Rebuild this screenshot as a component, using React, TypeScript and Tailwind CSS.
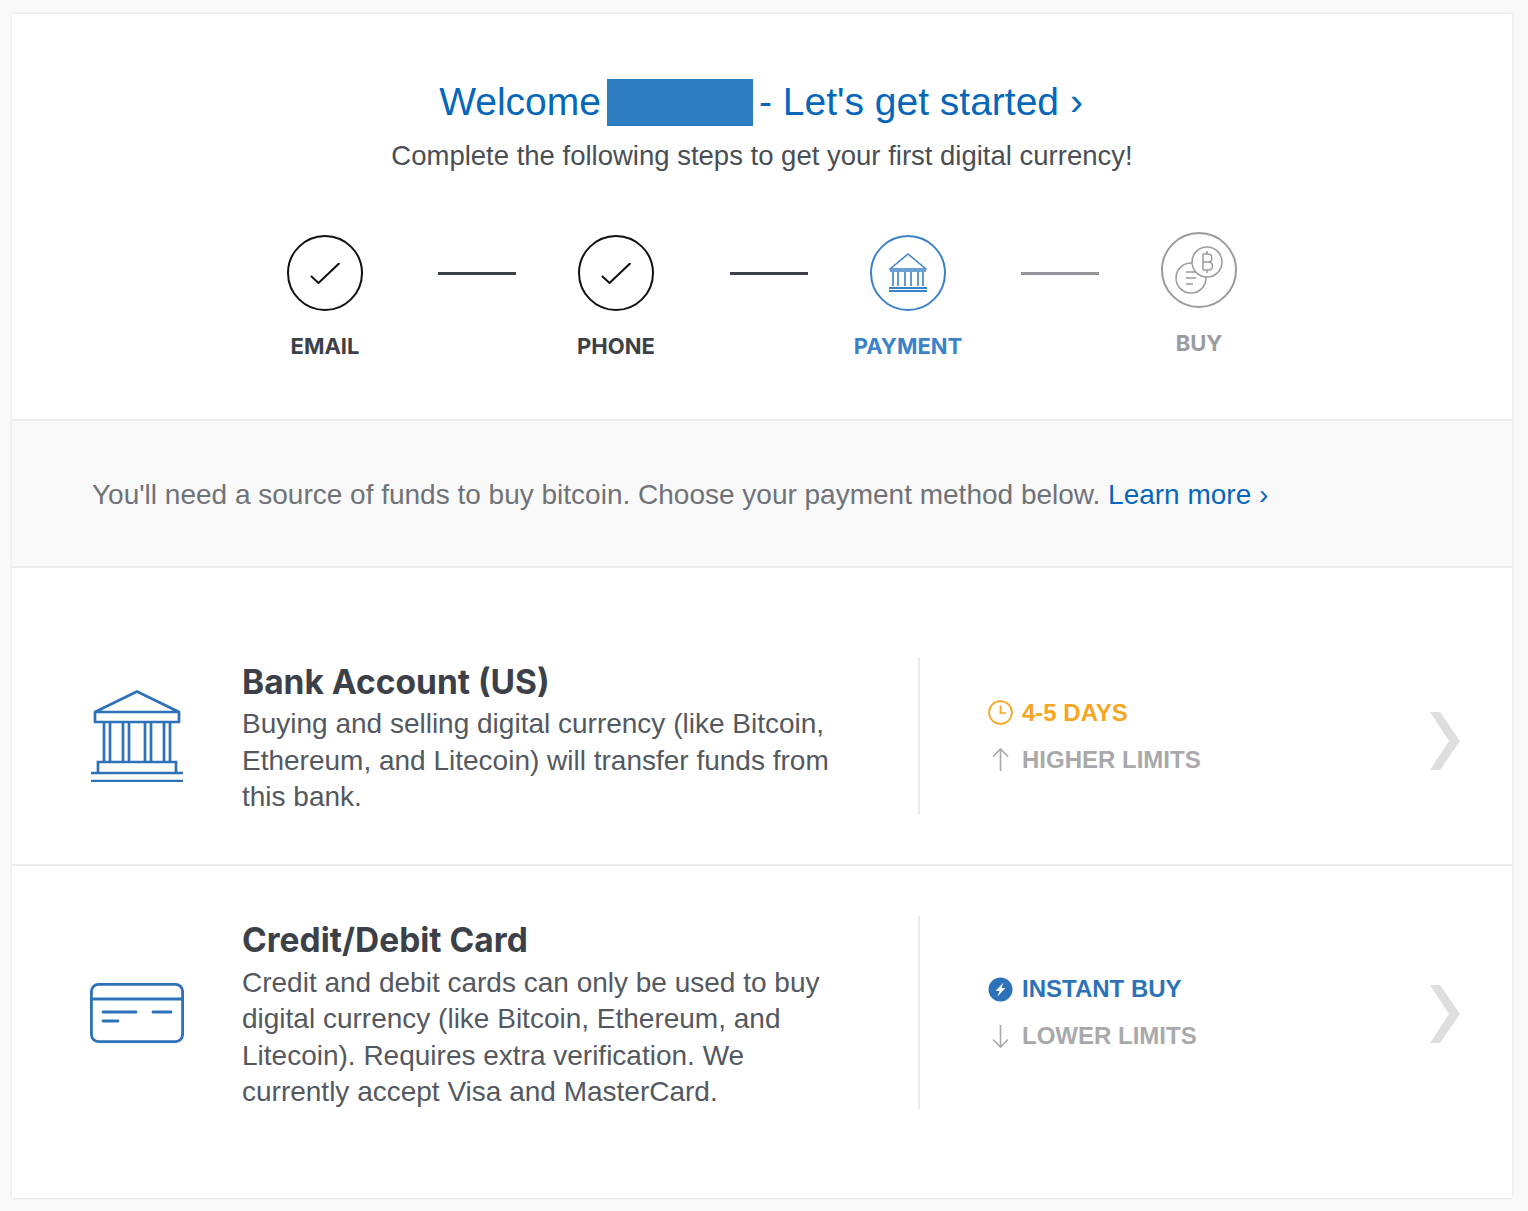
import React from 'react';

const BLUE = '#2d72b8';

function BankIcon({ className }: { className?: string }) {
  return (
    <svg className={className} viewBox="0 0 94 92" fill="none" stroke={BLUE} strokeWidth="2.7">
      <path d="M47 1.5 L5 22 V32 H89 V22 Z M5 22 H89" strokeLinejoin="round" />
      <path d="M14 32 V71 M20 32 V71 M33 32 V71 M39 32 V71 M55 32 V71 M61 32 V71 M74 32 V71 M80 32 V71" />
      <path d="M8 83 V72 H86 V83" />
      <path d="M1 83 H93 M1 91 H93" />
    </svg>
  );
}

function SmallBankIcon() {
  return (
    <svg className="w-[40px] h-[40px] -mt-[1px]" viewBox="0 0 40 40" fill="none" stroke="#3b82c9" strokeWidth="1.6">
      <path d="M20 1 L2 16 H38 Z" strokeLinejoin="round" />
      <path d="M2 18 H38" />
      <path d="M5 19 V33 M10 19 V33 M17 19 V33 M23 19 V33 M30 19 V33 M35 19 V33" />
      <path d="M1 35 H39 M1 38 H39" strokeWidth="2" />
    </svg>
  );
}

function CardIcon({ className }: { className?: string }) {
  return (
    <svg className={className} viewBox="0 0 94 60" fill="none" stroke={BLUE} strokeWidth="2.8">
      <rect x="1.4" y="1.4" width="91.2" height="57.2" rx="7" />
      <path d="M1.4 16 H92.6" />
      <path d="M13 29 H46 M63 29 H81 M13 38 H28" strokeLinecap="round" />
    </svg>
  );
}

function Check() {
  return (
    <svg className="w-[30px] h-[21px]" viewBox="0 0 30 21" fill="none" stroke="#111" strokeWidth="2">
      <path d="M1 13 L8.5 20 L29.5 0" />
    </svg>
  );
}

function CoinsIcon() {
  return (
    <svg className="w-[48px] h-[48px]" viewBox="0 0 48 48" fill="none" stroke="#999b9e" strokeWidth="1.5">
      <circle cx="16" cy="32" r="15" fill="#fff" />
      <circle cx="32" cy="16" r="15" fill="#fff" />
      <path d="M11 26 H21 M11 32 H21 M11 38 H18" />
      <path d="M28 8 V24 M32 5 V8 M32 24 V27 M28 8 H33 C38 8 38 16 33 16 H28 M33 16 C39 16 39 24 33 24 H28" />
    </svg>
  );
}

function ClockIcon() {
  return (
    <svg className="w-[25px] h-[25px]" viewBox="0 0 25 25" fill="none" stroke="#f5a623" strokeWidth="1.7">
      <circle cx="12.5" cy="12.5" r="11.4" />
      <path d="M12.5 5.5 V13 H18" />
    </svg>
  );
}

function BoltIcon() {
  return (
    <svg className="w-[25px] h-[25px]" viewBox="0 0 25 25">
      <circle cx="12.5" cy="12.5" r="12" fill={BLUE} />
      <path d="M15.5 5.5 L7.5 14 H11.5 L9.5 19.5 L17.5 11 H13.5 Z" fill="#fff" />
    </svg>
  );
}

function ArrowIcon({ down }: { down?: boolean }) {
  return (
    <svg className="w-[25px] h-[25px]" viewBox="0 0 25 25" fill="none" stroke="#a9a9ab" strokeWidth="1.6">
      {down ? <path d="M12.5 1 V23 M5 15.5 L12.5 23 L20 15.5" /> : <path d="M12.5 24 V2 M5 9.5 L12.5 2 L20 9.5" />}
    </svg>
  );
}

function Chevron() {
  return (
    <svg className="w-[30px] h-[58px] shrink-0" viewBox="0 0 30 58" fill="#dedede">
      <path d="M0 0 H10 L30 29 L10 58 H0 L19 29 Z" />
    </svg>
  );
}

function Step({ label, circle, labelClass, children, raised }: { label: string; circle: string; labelClass: string; children: React.ReactNode; raised?: boolean }) {
  return (
    <div className={`w-[120px] flex flex-col items-center ${raised ? '-mt-[3px]' : ''}`}>
      <div className={`w-[76px] h-[76px] rounded-full border-2 flex items-center justify-center ${circle}`}>{children}</div>
      <div className={`mt-[19px] text-[22px] leading-[32px] font-bold font-['Inter',sans-serif] ${labelClass}`}>{label}</div>
    </div>
  );
}

function Connector({ className }: { className: string }) {
  return <div className={`w-[78px] h-[3px] mt-[37px] mr-[40px] ${className}`} />;
}

function Feature({ icon, text, className }: { icon: React.ReactNode; text: string; className: string }) {
  return (
    <div className="flex items-center gap-[9px]">
      {icon}
      <span className={`text-[24px] leading-[30px] font-bold ${className}`}>{text}</span>
    </div>
  );
}

function Method({ icon, title, lines, features, rowClass, chevronClass, titleClass }: { icon: React.ReactNode; title: string; lines: string[]; features: React.ReactNode; rowClass: string; chevronClass: string; titleClass: string }) {
  return (
    <div className={`flex items-stretch pl-[78px] pr-[52px] ${rowClass}`}>
      <div className="w-[152px] shrink-0 flex items-center">{icon}</div>
      <div className="w-[678px] shrink-0 border-r-2 border-[#ebebeb]">
        <h2 className={`text-[33.5px] leading-[46px] pt-[1px] font-bold text-[#3c4149] font-['Inter',sans-serif] ${titleClass}`}>{title}</h2>
        <div className="-mb-[1.5px]">
          {lines.map((line) => (
            <p key={line} className="text-[28px] leading-[36.5px] text-[#54585f]">{line}</p>
          ))}
        </div>
      </div>
      <div className="flex-1 pl-[68px] flex flex-col justify-center gap-[17px]">{features}</div>
      <div className={`flex items-center ${chevronClass}`}><Chevron /></div>
    </div>
  );
}

export default function App() {
  return (
    <div className="min-h-[1211px] bg-[#f9f9f9] pt-[14px] px-[12px] pb-[11px] font-['Liberation_Sans',Arial,sans-serif]">
      <div className="w-[1500px] bg-white shadow-[0_0_3px_rgba(0,0,0,0.12)]">
        <div className="h-[407px] pt-[63px] border-b-2 border-[#ebebeb]">
          <h1 className="flex items-center justify-center pr-[2px] text-[39px] h-[50px] leading-[50px] text-[#0667ba]">
            <span>Welcome</span>
            <span className="w-[146px] h-[47px] bg-[#2d7dc0] mx-[6px]" />
            <span>- Let's get started ›</span>
          </h1>
          <p className="text-center text-[27.5px] leading-[36px] mt-[11px] text-[#4a4e55]">Complete the following steps to get your first digital currency!</p>
          <div className="flex justify-center mt-[61px]">
            <Step label="EMAIL" circle="border-[#111]" labelClass="text-[#3c4149]"><Check /></Step>
            <Connector className="ml-[53px] bg-[#3c4149]" />
            <Step label="PHONE" circle="border-[#111]" labelClass="text-[#3c4149]"><Check /></Step>
            <Connector className="ml-[54px] bg-[#3c4149]" />
            <Step label="PAYMENT" circle="border-[#3b82c9]" labelClass="text-[#3b82c9]"><SmallBankIcon /></Step>
            <Connector className="ml-[53px] bg-[#939598]" />
            <Step label="BUY" raised circle="border-[#999b9e]" labelClass="text-[#999b9e]"><CoinsIcon /></Step>
          </div>
        </div>
        <div className="h-[147px] bg-[#f9f9f9] border-b-2 border-[#ebebeb] pl-[80px] pt-[3px] flex items-center text-[28px] text-[#6f7378]">
          <p>You'll need a source of funds to buy bitcoin. Choose your payment method below. <span className="text-[#0667ba]">Learn more ›</span></p>
        </div>
        <div className="pt-[39px] pb-[38px]">
          <Method
            rowClass="pt-[51px] pb-[50px] border-b-2 border-[#ebebeb]"
            chevronClass="pt-[10px]"
            titleClass="pb-[1px]"
            icon={<BankIcon className="w-[94px] h-[92px]" />}
            title="Bank Account (US)"
            lines={['Buying and selling digital currency (like Bitcoin,', 'Ethereum, and Litecoin) will transfer funds from', 'this bank.']}
            features={
              <>
                <Feature icon={<ClockIcon />} text="4-5 DAYS" className="text-[#f5a623]" />
                <Feature icon={<ArrowIcon />} text="HIGHER LIMITS" className="text-[#a9a9ab]" />
              </>
            }
          />
          <Method
            rowClass="pt-[50px] pb-[51px]"
            chevronClass="pt-[2px]"
            titleClass="pb-[1.5px]"
            icon={<CardIcon className="w-[94px] h-[60px]" />}
            title="Credit/Debit Card"
            lines={['Credit and debit cards can only be used to buy', 'digital currency (like Bitcoin, Ethereum, and', 'Litecoin). Requires extra verification. We', 'currently accept Visa and MasterCard.']}
            features={
              <>
                <Feature icon={<BoltIcon />} text="INSTANT BUY" className="text-[#2d72b8]" />
                <Feature icon={<ArrowIcon down />} text="LOWER LIMITS" className="text-[#a9a9ab]" />
              </>
            }
          />
        </div>
      </div>
    </div>
  );
}
